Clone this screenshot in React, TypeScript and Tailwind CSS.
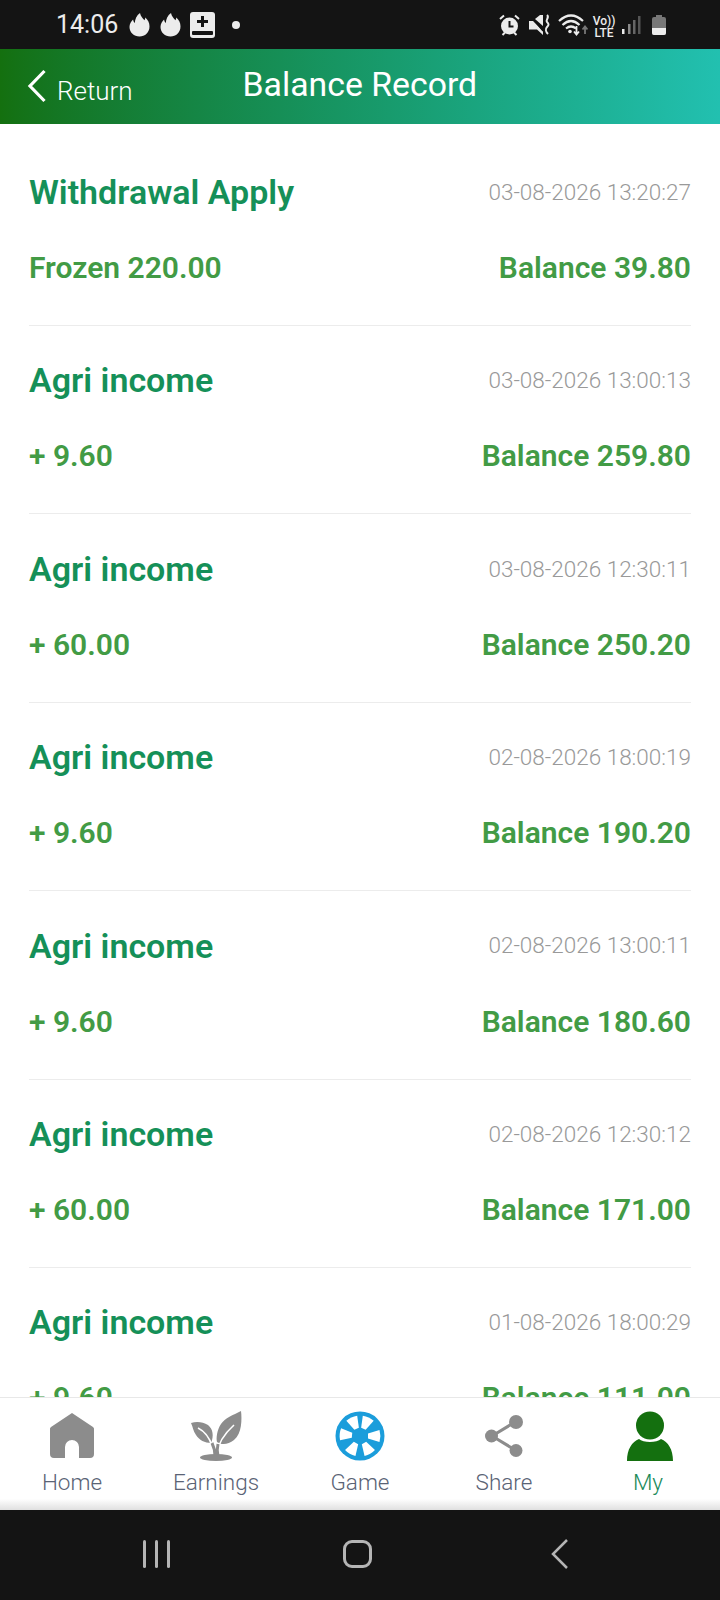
import React from "react";

const rows = [
  ["Withdrawal Apply", "03-08-2026 13:20:27", "Frozen 220.00", "Balance 39.80"],
  ["Agri income", "03-08-2026 13:00:13", "+ 9.60", "Balance 259.80"],
  ["Agri income", "03-08-2026 12:30:11", "+ 60.00", "Balance 250.20"],
  ["Agri income", "02-08-2026 18:00:19", "+ 9.60", "Balance 190.20"],
  ["Agri income", "02-08-2026 13:00:11", "+ 9.60", "Balance 180.60"],
  ["Agri income", "02-08-2026 12:30:12", "+ 60.00", "Balance 171.00"],
  ["Agri income", "01-08-2026 18:00:29", "+ 9.60", "Balance 111.00"],
];

const Flame = () => (
  <svg width="21" height="24" viewBox="0 0 21 24" className="mr-[10px]">
    <path fill="#ececec" d="M11 0c.6 3.500 2.500 5 4.500 7.200.4-.8.7-1.600.8-2.600C19 7 20.500 10 20.500 13.500 20.500 19.500 16 23.500 10.500 23.500S.5 19.500.5 14c0-3.500 1.700-5.600 3.600-7.600.2 1.600.7 2.700 1.700 3.500C6 6.300 7.500 2.500 11 0z" />
  </svg>
);

const StatusLeft = () => (
  <div className="flex items-center pl-[56px]">
    <span className="text-[25px] font-normal text-[#ececec] mr-[11px] leading-none">14:06</span>
    <Flame />
    <Flame />
    <svg width="25" height="26" viewBox="0 0 25 26" className="ml-[-1px]">
      <rect x="0" y="0" width="25" height="26" rx="3" fill="#ececec" />
      <path d="M11 4h3v4h4v3h-4v4h-3v-4H7V8h4z" fill="#141414" />
      <rect x="2" y="19" width="21" height="4" rx="1" fill="#141414" />
    </svg>
    <span className="ml-[17px] w-[8px] h-[8px] rounded-full bg-[#ececec]" />
  </div>
);

const StatusRight = () => (
  <div className="flex items-center pr-[54px] h-[40px]">
    <svg width="21" height="22" viewBox="0 0 21 22">
      <circle cx="10.500" cy="12" r="8.500" fill="#ececec" />
      <path d="M10.500 7v5.500h4" stroke="#141414" strokeWidth="2" fill="none" />
      <path d="M1 5l4-3.500M20 5l-4-3.500M3.500 21l2.500-2.500M17.500 21L15 18.500" stroke="#ececec" strokeWidth="2" />
    </svg>
    <svg width="21" height="22" viewBox="0 0 21 22" className="ml-[9px]">
      <path d="M0 7h4l10 10v4l-6-5.500H0zM6 5l5-4h3v11z" fill="#ececec" />
      <path d="M1 1l13 16" stroke="#141414" strokeWidth="1.200" />
      <path d="M18 1c3 2.500-2 5 0 7s2 3 0 5 -1 5 1 7" stroke="#ececec" strokeWidth="2" fill="none" />
    </svg>
    <svg width="30" height="22" viewBox="0 0 30 22" className="ml-[8px]">
      <path d="M1 7q12-11 24 0M4.500 11q8.500-8 17 0M8 14.500q5-4 10 0" stroke="#ececec" strokeWidth="2.200" fill="none" />
      <circle cx="12" cy="17.500" r="1.800" fill="#ececec" />
      <path d="M18.500 12v8M16 17.500l2.500 3 2.500-3" stroke="#ececec" strokeWidth="1.800" fill="none" />
      <path d="M27 20v-7M24.500 15.500l2.500-3 2.500 3" stroke="#777" strokeWidth="1.800" fill="none" />
    </svg>
    <div className="flex flex-col items-center text-[#ececec] text-[12px] font-medium leading-[12px] ml-[6px] mt-[4px] w-[20px]">
      <span className="whitespace-nowrap">Vo))</span>
      <span>LTE</span>
    </div>
    <svg width="19" height="20" viewBox="0 0 19 20" className="ml-[8px]">
      <rect x="0" y="14" width="2.500" height="5" fill="#ececec" />
      <rect x="6" y="9" width="2.500" height="10" fill="#8a8a8a" />
      <rect x="11" y="5" width="2.500" height="14" fill="#666" />
      <rect x="16" y="1" width="2.500" height="18" fill="#555" />
    </svg>
    <svg width="14" height="20" viewBox="0 0 14 20" className="ml-[11px]">
      <path d="M4 0h6v2h2a2 2 0 0 1 2 2v14a2 2 0 0 1-2 2H2a2 2 0 0 1-2-2V4a2 2 0 0 1 2-2h2z" fill="#777" />
      <path d="M0 13h14v5a2 2 0 0 1-2 2H2a2 2 0 0 1-2-2z" fill="#ececec" />
    </svg>
  </div>
);

const Row = ({ r }: { r: string[] }) => (
  <div className="h-[188.4px] shrink-0 border-b border-[#ececec] flex flex-col">
    <div className="flex justify-between items-center h-[37px] mt-[36px]">
      <span className="text-[34px] font-semibold text-[#159058] leading-none">{r[0]}</span>
      <span className="text-[22.5px] font-light text-[#999] leading-none">{r[1]}</span>
    </div>
    <div className="flex justify-between items-center h-[33px] mt-[41px]">
      <span className="text-[30px] font-semibold text-[#429b45] leading-none">{r[2]}</span>
      <span className="text-[30px] font-semibold text-[#429b45] leading-none">{r[3]}</span>
    </div>
  </div>
);

const NavItem = ({ label, active, children }: { label: string; active?: boolean; children: React.ReactNode }) => (
  <div className="flex-1 flex flex-col items-center">
    <div className="h-[52px] flex items-center justify-center mt-[12px]">{children}</div>
    <span className={`text-[22.5px] font-light leading-none mt-[9px] ${active ? "text-[#1a8a5a]" : "text-[#5a6375]"}`}>{label}</span>
  </div>
);

const wedge = "M19 5.500a20.500 20.500 0 0 1 12 0L27.500 17h-5z";

export default function App() {
  return (
    <div className="w-[720px] h-[1600px] flex flex-col bg-white font-['Roboto',sans-serif] overflow-hidden">
      <div className="h-[49px] bg-[#141414] flex items-center justify-between shrink-0">
        <StatusLeft />
        <StatusRight />
      </div>
      <div className="h-[75px] shrink-0 bg-gradient-to-r from-[#14700f] to-[#22c0b0] flex items-center text-white">
        <svg width="20" height="34" viewBox="0 0 20 34" className="ml-[27px] mb-[2px]">
          <path d="M17.500 2L3 17l14.500 15" stroke="#fff" strokeWidth="3.200" fill="none" />
        </svg>
        <span className="text-[26px] font-light ml-[10px] mt-[8px] leading-none">Return</span>
        <span className="flex-1 text-center text-[33.8px] font-normal pr-[133px] pb-[4px] leading-none">Balance Record</span>
      </div>
      <div className="h-[1273px] shrink-0 overflow-hidden px-[29px] flex flex-col">
        <div className="h-[13.6px] shrink-0" />
        {rows.map((r, i) => <Row key={i} r={r} />)}
      </div>
      <div className="h-[113px] shrink-0 border-t border-[#e8e8e8] bg-gradient-to-b from-white from-90% to-[#e0e0e0] flex">
        <NavItem label="Home">
          <svg width="46" height="46" viewBox="0 0 46 46">
            <path fill="#8c8c8c" d="M23 0l21 14a3 3 0 0 1 1 3v24a4 4 0 0 1-4 4H30V34a7 7 0 0 0-14 0v11H5a4 4 0 0 1-4-4V17a3 3 0 0 1 1-3z" />
          </svg>
        </NavItem>
        <NavItem label="Earnings">
          <svg width="52" height="52" viewBox="0 0 52 52">
            <path fill="#8c8c8c" d="M51 1c1 8 1 23-7 29-6 5-13 5-17 2-1-4 0-12 4-18C35 8 43 5 51 1z" />
            <path fill="#8c8c8c" d="M1 13c6-2 12-1 17 2 5 4 6 11 3 18-6 0-12-3-15-8C3 21 3 17 1 13z" />
            <path d="M27 44c1-11 7-20 17-29M8 18c6 3 11 8 14 18" stroke="#fff" strokeWidth="1.600" fill="none" />
            <path d="M25 46c0-4-1-9-3-13M28 46c-1-4-1-8 0-12" stroke="#8c8c8c" strokeWidth="3" fill="none" />
            <ellipse cx="26" cy="47.500" rx="16" ry="3.500" fill="#8c8c8c" />
          </svg>
        </NavItem>
        <NavItem label="Game">
          <svg width="50" height="50" viewBox="0 0 50 50">
            <circle cx="25" cy="25" r="24.500" fill="#1b9ddb" />
            <g fill="#fff">
              <path d={wedge} transform="rotate(25 25 25)" />
              <path d={wedge} transform="rotate(90 25 25)" />
              <path d={wedge} transform="rotate(150 25 25)" />
              <path d={wedge} transform="rotate(210 25 25)" />
              <path d={wedge} transform="rotate(275 25 25)" />
              <path d={wedge} transform="rotate(335 25 25)" />
            </g>
            <circle cx="25" cy="25" r="7.500" fill="#1b9ddb" />
          </svg>
        </NavItem>
        <NavItem label="Share">
          <svg width="38" height="42" viewBox="0 0 38 42">
            <path d="M7 21L31 6.500M7 21l24 14.500" stroke="#8c8c8c" strokeWidth="3" fill="none" />
            <circle cx="31" cy="7" r="7" fill="#8c8c8c" />
            <circle cx="6.500" cy="21" r="6.500" fill="#8c8c8c" />
            <circle cx="31" cy="35.500" r="6.500" fill="#8c8c8c" />
          </svg>
        </NavItem>
        <NavItem label="My" active>
          <svg width="46" height="50" viewBox="0 0 46 50" className="ml-[3px]">
            <circle cx="23" cy="14.500" r="14" fill="#14700f" />
            <path fill="#14700f" d="M0 50c0-12 5-19 12-22 4 4 18 4 22 0 7 3 12 10 12 22z" />
          </svg>
        </NavItem>
      </div>
      <div className="flex-1 bg-[#141414] flex items-center">
        <div className="flex gap-[9px] ml-[143px] mb-[3px]">
          <span className="w-[3px] h-[28px] bg-[#b5b5b5] rounded" />
          <span className="w-[3px] h-[28px] bg-[#b5b5b5] rounded" />
          <span className="w-[3px] h-[28px] bg-[#b5b5b5] rounded" />
        </div>
        <div className="ml-[173px] mb-[3px] w-[29px] h-[28px] border-[3px] border-[#b5b5b5] rounded-[9px]" />
        <svg width="20" height="32" viewBox="0 0 20 32" className="ml-[178px] mb-[3px]">
          <path d="M17 2L3 16l14 14" stroke="#b5b5b5" strokeWidth="2.500" fill="none" />
        </svg>
      </div>
    </div>
  );
}
